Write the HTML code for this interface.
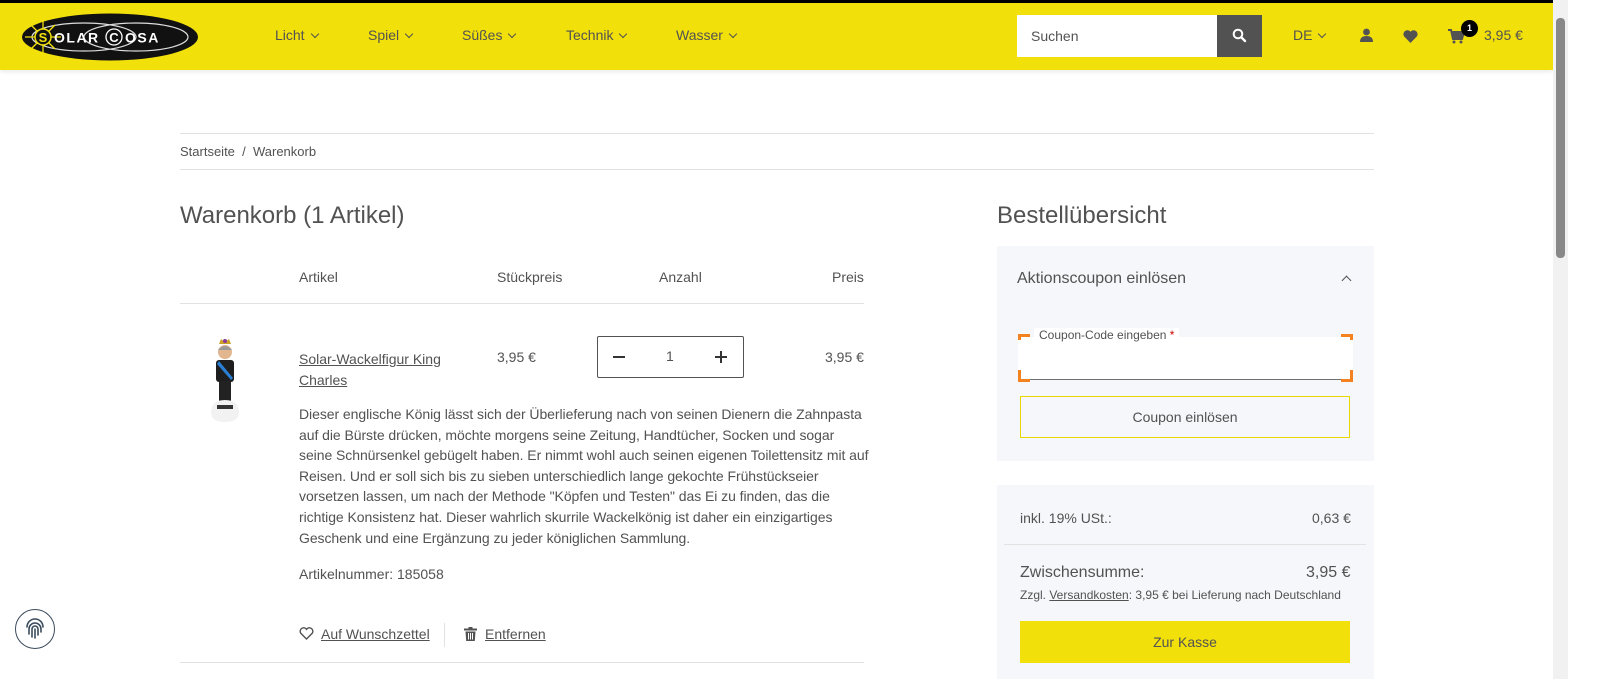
<!DOCTYPE html>
<html><head><meta charset="utf-8"><style>
*{margin:0;padding:0;box-sizing:border-box}
body{width:1600px;height:679px;overflow:hidden;background:#fff;font-family:"Liberation Sans",sans-serif;color:#525252;position:relative;font-size:14px}
.a{position:absolute;white-space:nowrap}
#hdr{position:absolute;left:0;top:0;width:1553px;height:70px;background:#f2e00b;border-top:3px solid #000;box-shadow:0 2px 4px rgba(0,0,0,.08)}
.nav{top:27px;font-size:14px;color:#525252}
.chev{display:inline-block;width:6px;height:6px;border-right:1.6px solid #525252;border-bottom:1.6px solid #525252;transform:rotate(45deg);margin-left:7px;position:relative;top:-3px}
.line{position:absolute;height:1px;background:#e2e2e2}
u{text-decoration:underline}
</style></head><body>
<div id="hdr"></div>
<svg class="a" style="left:21px;top:13px" width="178" height="48" viewBox="0 0 178 48">
<ellipse cx="89" cy="24" rx="88" ry="23.5" fill="#111"/>
<ellipse cx="63" cy="24" rx="52" ry="14" fill="none" stroke="#ddd" stroke-width="1.2"/>
<ellipse cx="115" cy="24" rx="52" ry="14" fill="none" stroke="#ddd" stroke-width="1.2"/>
<g stroke="#f2e00b" stroke-width="1.3"><line x1="22" y1="6" x2="22" y2="42"/><line x1="4" y1="24" x2="40" y2="24"/><line x1="10" y1="12" x2="34" y2="36"/><line x1="34" y1="12" x2="10" y2="36"/></g>
<circle cx="22" cy="24" r="8" fill="#111" stroke="#f2e00b" stroke-width="1.5"/>
<text x="22" y="29" font-size="13" font-weight="bold" fill="#f2e00b" text-anchor="middle" font-family="Liberation Sans">S</text>
<text x="33" y="29.5" font-size="14" font-weight="bold" fill="#fff" font-family="Liberation Sans" letter-spacing="1.5">OLAR</text>
<circle cx="93" cy="24" r="8" fill="#111" stroke="#fff" stroke-width="1.3"/>
<text x="93" y="29" font-size="13" font-weight="bold" fill="#fff" text-anchor="middle" font-family="Liberation Sans">C</text>
<text x="104" y="29.5" font-size="14" font-weight="bold" fill="#fff" font-family="Liberation Sans" letter-spacing="1.5">OSA</text>
</svg>
<div class="a nav" style="left:275px">Licht<span class="chev"></span></div>
<div class="a nav" style="left:368px">Spiel<span class="chev"></span></div>
<div class="a nav" style="left:462px">Süßes<span class="chev"></span></div>
<div class="a nav" style="left:566px">Technik<span class="chev"></span></div>
<div class="a nav" style="left:676px">Wasser<span class="chev"></span></div>
<div class="a" style="left:1017px;top:15px;width:200px;height:42px;background:#fff;padding:13px 14px;color:#525252">Suchen</div>
<div class="a" style="left:1217px;top:15px;width:45px;height:42px;background:#525252"></div>
<svg class="a" style="left:1232px;top:28px" width="15" height="15" viewBox="0 0 15 15"><circle cx="6" cy="6" r="4.3" fill="none" stroke="#fff" stroke-width="2"/><line x1="9.2" y1="9.2" x2="13" y2="13" stroke="#fff" stroke-width="2.4" stroke-linecap="round"/></svg>
<div class="a nav" style="left:1293px">DE<span class="chev"></span></div>
<svg class="a" style="left:1360px;top:28px" width="13" height="14" viewBox="0 0 13 14"><circle cx="6.5" cy="4" r="3.4" fill="#525252"/><path d="M0 14 Q0 8 6.5 8 Q13 8 13 14Z" fill="#525252"/></svg>
<svg class="a" style="left:1403px;top:30px" width="15" height="13" viewBox="0 0 15 13"><path d="M7.5 13 L1.2 6.5 A3.6 3.6 0 0 1 7.5 1.8 A3.6 3.6 0 0 1 13.8 6.5Z" fill="#525252"/></svg>
<svg class="a" style="left:1448px;top:29px" width="17" height="15" viewBox="0 0 17 15"><path d="M0 1 H3 L5 10 H14 L16 3 H4" fill="none" stroke="#525252" stroke-width="2"/><path d="M4.5 3 H15.5 L14 9 H5.5Z" fill="#525252"/><circle cx="6" cy="13" r="1.5" fill="#525252"/><circle cx="13" cy="13" r="1.5" fill="#525252"/></svg>
<div class="a" style="left:1461px;top:20px;width:17px;height:17px;border-radius:50%;background:#000;color:#fff;font-size:9px;font-weight:bold;text-align:center;line-height:17px">1</div>
<div class="a nav" style="left:1484px">3,95 €</div>
<div class="a" style="left:1553px;top:0;width:15px;height:679px;background:#f1f1f1"></div>
<div class="a" style="left:1556px;top:18px;width:9px;height:240px;background:#888;border-radius:4px"></div>
<div class="a" style="left:1568px;top:0;width:32px;height:679px;background:#fff"></div>

<div class="line" style="left:180px;top:133px;width:1194px"></div>
<div class="a" style="left:180px;top:144px;font-size:13px;color:#525252">Startseite &nbsp;/&nbsp; Warenkorb</div>
<div class="line" style="left:180px;top:169px;width:1194px"></div>
<div class="a" style="left:180px;top:202px;font-size:24px;color:#525252">Warenkorb (1 Artikel)</div>
<div class="a" style="left:997px;top:202px;font-size:24px;color:#525252">Bestellübersicht</div>
<div class="a" style="left:299px;top:269px">Artikel</div>
<div class="a" style="left:497px;top:269px">Stückpreis</div>
<div class="a" style="left:659px;top:269px">Anzahl</div>
<div class="a" style="left:832px;top:269px">Preis</div>
<div class="line" style="left:180px;top:303px;width:684px"></div>
<svg class="a" style="left:205px;top:336px" width="40" height="88" viewBox="0 0 40 88">
<path d="M14 8 L16 3 L20 6 L24 3 L26 8Z" fill="#c9a227"/><circle cx="20" cy="5" r="2" fill="#8b3a9b"/>
<circle cx="20" cy="16" r="7" fill="#e2b68f"/><path d="M13 14 Q20 6 27 14" fill="#999"/>
<rect x="11" y="24" width="18" height="22" rx="3" fill="#1e1e1e"/><path d="M14 25 L28 42 L26 44 L12 28Z" fill="#2a7fd4"/>
<rect x="14" y="45" width="12" height="20" fill="#222"/>
<path d="M6 76 Q6 64 20 64 Q34 64 34 76 Q34 86 20 86 Q6 86 6 76Z" fill="#f2f2f2"/><rect x="12" y="69" width="16" height="4" fill="#333"/>
</svg>
<div class="a" style="left:299px;top:349px;line-height:21px"><u>Solar-Wackelfigur King</u><br><u>Charles</u></div>
<div class="a" style="left:497px;top:349px">3,95 €</div>
<div class="a" style="left:597px;top:336px;width:147px;height:42px;border:1px solid #525252;border-radius:2px"></div>
<div class="a" style="left:613px;top:356px;width:12px;height:2px;background:#333"></div>
<div class="a" style="left:715px;top:356px;width:12px;height:2px;background:#333"></div>
<div class="a" style="left:720px;top:351px;width:2px;height:12px;background:#333"></div>
<div class="a" style="left:666px;top:348px">1</div>
<div class="a" style="left:825px;top:349px">3,95 €</div>
<div class="a" style="left:299px;top:404px;width:572px;white-space:normal;line-height:20.6px;letter-spacing:-0.06px">Dieser englische König lässt sich der Überlieferung nach von seinen Dienern die Zahnpasta auf die Bürste drücken, möchte morgens seine Zeitung, Handtücher, Socken und sogar seine Schnürsenkel gebügelt haben. Er nimmt wohl auch seinen eigenen Toilettensitz mit auf Reisen. Und er soll sich bis zu sieben unterschiedlich lange gekochte Frühstückseier vorsetzen lassen, um nach der Methode "Köpfen und Testen" das Ei zu finden, das die richtige Konsistenz hat. Dieser wahrlich skurrile Wackelkönig ist daher ein einzigartiges Geschenk und eine Ergänzung zu jeder königlichen Sammlung.</div>
<div class="a" style="left:299px;top:566px">Artikelnummer: 185058</div>
<svg class="a" style="left:299px;top:627px" width="15" height="13" viewBox="0 0 15 13"><path d="M7.5 12 L1.8 6.3 A3.2 3.2 0 0 1 7.5 2.3 A3.2 3.2 0 0 1 13.2 6.3Z" fill="none" stroke="#525252" stroke-width="1.4"/></svg>
<div class="a" style="left:321px;top:626px"><u>Auf Wunschzettel</u></div>
<div class="a" style="left:444px;top:623px;width:1px;height:24px;background:#e2e2e2"></div>
<svg class="a" style="left:464px;top:627px" width="13" height="14" viewBox="0 0 13 14"><rect x="0" y="1.5" width="13" height="2" fill="#525252"/><rect x="4.5" y="0" width="4" height="2" fill="#525252"/><path d="M1.5 4.5 H11.5 L10.8 14 H2.2Z" fill="#525252"/><g stroke="#fff" stroke-width="1"><line x1="4.5" y1="6" x2="4.5" y2="12.5"/><line x1="6.5" y1="6" x2="6.5" y2="12.5"/><line x1="8.5" y1="6" x2="8.5" y2="12.5"/></g></svg>
<div class="a" style="left:485px;top:626px"><u>Entfernen</u></div>
<div class="line" style="left:180px;top:662px;width:684px"></div>
<div class="a" style="left:15px;top:609px;width:40px;height:40px;border-radius:50%;border:1.3px solid #3a4b5c;background:#fff"></div>
<svg class="a" style="left:24px;top:618px" width="22" height="22" viewBox="0 0 22 22" fill="none" stroke="#3a4b5c" stroke-width="1.6" stroke-linecap="round"><path d="M3 9 A8 8 0 0 1 19 9"/><path d="M5 16 V11 A6 6 0 0 1 17 11 V14"/><path d="M8 19 V11 A3 3 0 0 1 14 11 V17"/><path d="M11 20 V11"/></svg>

<div class="a" style="left:997px;top:246px;width:377px;height:215px;background:#f5f7fa"></div>
<div class="a" style="left:1017px;top:270px;font-size:16px">Aktionscoupon einlösen</div>
<div class="a" style="left:1343px;top:277px;width:7px;height:7px;border-left:1.8px solid #525252;border-top:1.8px solid #525252;transform:rotate(45deg)"></div>
<div class="a" style="left:1020px;top:337px;width:330px;height:43px;background:#fff;border-bottom:1px solid #707070"></div>
<div class="a" style="left:1018px;top:334px;width:12px;height:48px;border:3px solid #f58220;border-right:none"></div>
<div class="a" style="left:1018px;top:340px;width:4px;height:30px;background:#fff"></div>
<div class="a" style="left:1341px;top:334px;width:12px;height:48px;border:3px solid #f58220;border-left:none"></div>
<div class="a" style="left:1349px;top:340px;width:4px;height:30px;background:#fff"></div>
<div class="a" style="left:1034px;top:328px;background:#fff;padding:0 5px;font-size:12px;color:#525252">Coupon-Code eingeben <span style="color:#c00">*</span></div>
<div class="a" style="left:1020px;top:396px;width:330px;height:42px;border:1px solid #e8d800;text-align:center;line-height:40px">Coupon einlösen</div>
<div class="a" style="left:997px;top:485px;width:377px;height:194px;background:#f5f7fa"></div>
<div class="a" style="left:1020px;top:510px">inkl. 19% USt.:</div>
<div class="a" style="left:1312px;top:510px">0,63 €</div>
<div class="line" style="left:1004px;top:544px;width:362px"></div>
<div class="a" style="left:1020px;top:564px;font-size:16px">Zwischensumme:</div>
<div class="a" style="left:1306px;top:564px;font-size:16px">3,95 €</div>
<div class="a" style="left:1020px;top:588px;font-size:12px">Zzgl. <u>Versandkosten</u>: 3,95 € bei Lieferung nach Deutschland</div>
<div class="a" style="left:1020px;top:621px;width:330px;height:42px;background:#f2e00b;text-align:center;line-height:42px">Zur Kasse</div>
</body></html>
